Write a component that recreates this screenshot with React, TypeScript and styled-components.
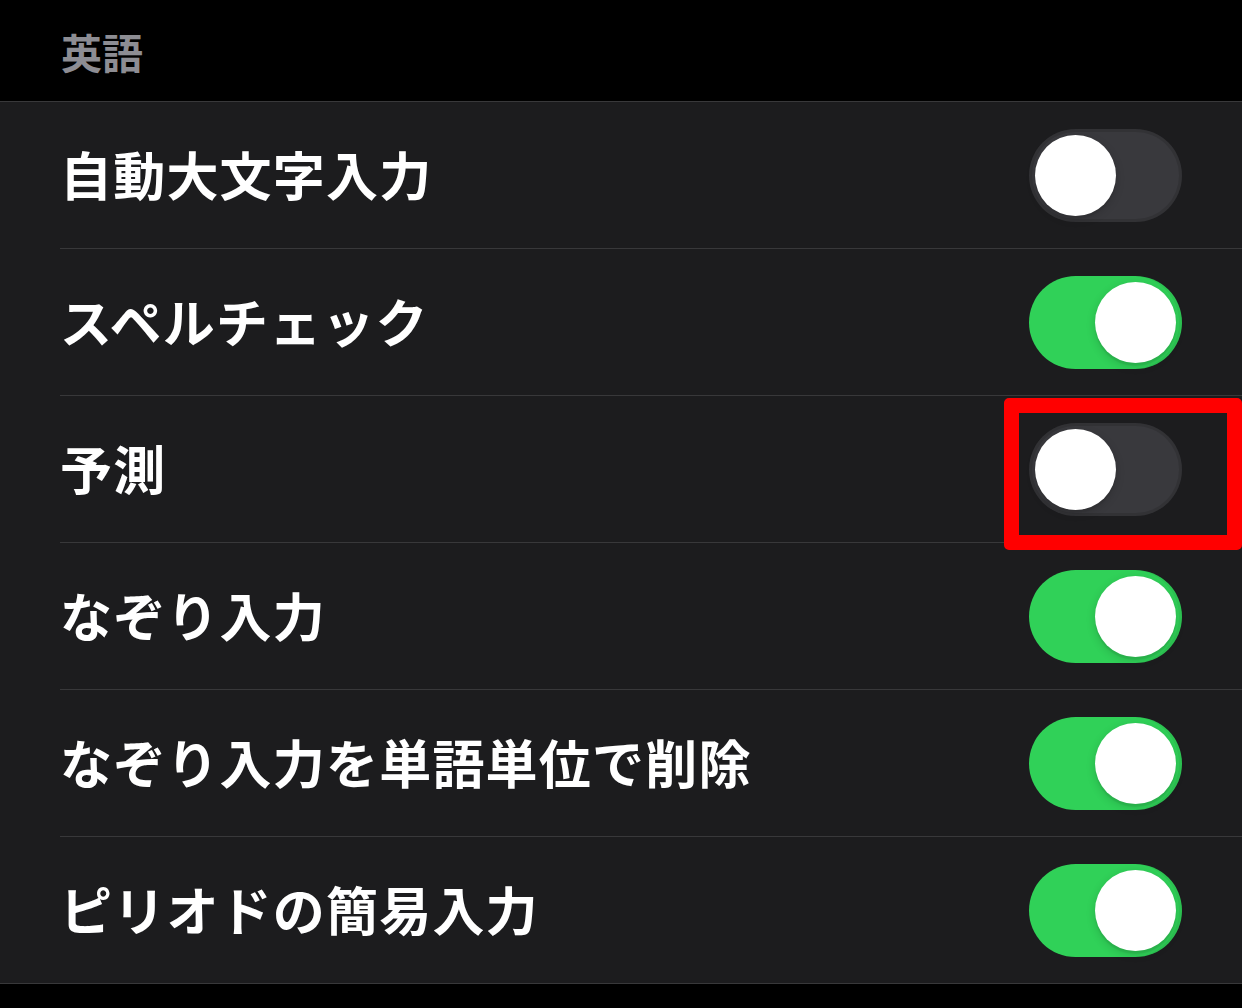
import styled, { createGlobalStyle } from 'styled-components';

const GlobalStyle = createGlobalStyle`
  html, body {
    margin: 0;
    padding: 0;
    background: #000000;
    overflow: hidden;
  }
  body {
    font-family: 'Noto Sans CJK JP', 'Noto Sans', sans-serif;
    -webkit-font-smoothing: antialiased;
  }
`;

const Page = styled.div`
  width: 1242px;
  height: 1008px;
  background: #000000;
`;

const SectionHeader = styled.div`
  height: 102px;
  box-sizing: border-box;
  padding: 0 0 0 61px;
  display: flex;
  align-items: center;
  border-bottom: 1px solid #38383a;
  h2 {
    margin: 0;
    font-size: 41px;
    font-weight: 700;
    color: #8d8d93;
    line-height: 1;
    transform: translateY(1px);
  }
`;

const List = styled.div`
  background: #1c1c1e;
  border-bottom: 1px solid #38383a;
`;

const Row = styled.div<{ $last?: boolean }>`
  height: 146px;
  margin-left: 60px;
  padding-right: 60px;
  display: flex;
  align-items: center;
  justify-content: space-between;
  border-bottom: ${({ $last }) => ($last ? 'none' : '1px solid #38383a')};
`;

const Label = styled.span`
  font-size: 52px;
  font-weight: 700;
  color: #ffffff;
  line-height: 1;
  letter-spacing: 1.2px;
  transform: translateY(-1px);
`;

const SwitchWrap = styled.div`
  position: relative;
`;

const Track = styled.div<{ $on: boolean }>`
  width: 153px;
  height: 93px;
  border-radius: 46.5px;
  background: ${({ $on }) => ($on ? '#30d158' : '#39393d')};
  box-shadow: ${({ $on }) =>
    $on ? 'inset -3px 0 0 rgba(0, 0, 0, 0.06)' : 'inset 0 0 0 3px rgba(0, 0, 0, 0.12)'};
  position: relative;
`;

const Knob = styled.div<{ $on: boolean }>`
  position: absolute;
  top: 6px;
  left: ${({ $on }) => ($on ? '66px' : '6px')};
  width: 81px;
  height: 81px;
  border-radius: 50%;
  background: #ffffff;
  box-shadow: 0 3px 10px rgba(0, 0, 0, 0.16), 0 3px 1px rgba(0, 0, 0, 0.06);
`;

const Highlight = styled.div`
  position: absolute;
  top: -25px;
  left: -25px;
  right: -60px;
  bottom: -34px;
  border: 15px solid #ff0000;
  border-radius: 5px;
  pointer-events: none;
`;

type TSetting = {
  label: string;
  on: boolean;
  highlighted?: boolean;
};

const settings: TSetting[] = [
  { label: '自動大文字入力', on: false },
  { label: 'スペルチェック', on: true },
  { label: '予測', on: false, highlighted: true },
  { label: 'なぞり入力', on: true },
  { label: 'なぞり入力を単語単位で削除', on: true },
  { label: 'ピリオドの簡易入力', on: true },
];

function Switch({ on, highlighted }: { on: boolean; highlighted?: boolean }) {
  return (
    <SwitchWrap>
      <Track $on={on}>
        <Knob $on={on} />
      </Track>
      {highlighted && <Highlight />}
    </SwitchWrap>
  );
}

export default function App() {
  return (
    <Page>
      <GlobalStyle />
      <SectionHeader>
        <h2>英語</h2>
      </SectionHeader>
      <List>
        {settings.map(({ label, on, highlighted }, i) => (
          <Row key={label} $last={i === settings.length - 1}>
            <Label>{label}</Label>
            <Switch on={on} highlighted={highlighted} />
          </Row>
        ))}
      </List>
    </Page>
  );
}
